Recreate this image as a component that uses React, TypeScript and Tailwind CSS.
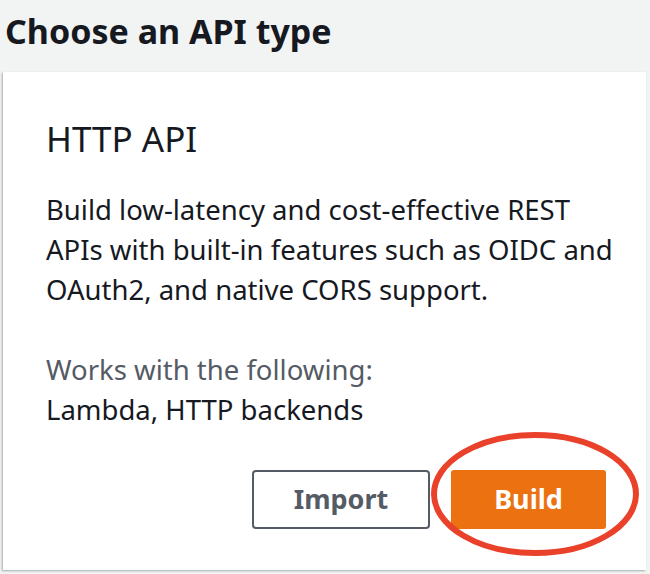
export default function App() {
  return (
    <div
      className="w-[650px] h-[574px] bg-[#f2f3f3] overflow-hidden text-[#16191f]"
      style={{ fontFamily: '"Noto Sans", "Open Sans", sans-serif' }}
    >
      <h1 className="pl-[5px] pt-[9px] h-[72px] text-[34px] font-bold leading-[44px]">
        Choose an API type
      </h1>
      <div className="ml-[3px] mr-[4px] h-[498px] bg-white shadow-[-1px_1px_2px_rgba(0,0,0,0.3)] pl-[43px] pr-[30px] pt-[45px]">
        <h2 className="text-[35px] leading-[44px]">HTTP API</h2>
        <p className="mt-[29px] text-[27.5px] leading-[40px] whitespace-nowrap">
          Build low-latency and cost-effective REST
          <br />
          APIs with built-in features such as OIDC and
          <br />
          OAuth2, and native CORS support.
        </p>
        <p className="mt-[40px] text-[27.5px] leading-[40px] text-[#545b64]">
          Works with the following:
        </p>
        <p className="text-[27.5px] leading-[40px]">Lambda, HTTP backends</p>
        <div className="mt-[40px] flex justify-end gap-[21px] pr-[10px]">
          <button className="w-[178px] h-[59px] rounded-[4px] border-2 border-[#545b64] bg-white text-[#545b64] text-[27px] font-bold">
            Import
          </button>
          <div className="relative">
            <button className="w-[155px] h-[59px] rounded-[3px] bg-[#ec7211] text-white text-[27px] font-bold">
              Build
            </button>
            <svg
              className="absolute left-[-21px] top-[-38px] pointer-events-none"
              width="210"
              height="126"
              viewBox="0 0 210 126"
            >
              <ellipse cx="105" cy="62" rx="101" ry="59" fill="none" stroke="#e9412a" strokeWidth="6" />
            </svg>
          </div>
        </div>
      </div>
    </div>
  );
}
